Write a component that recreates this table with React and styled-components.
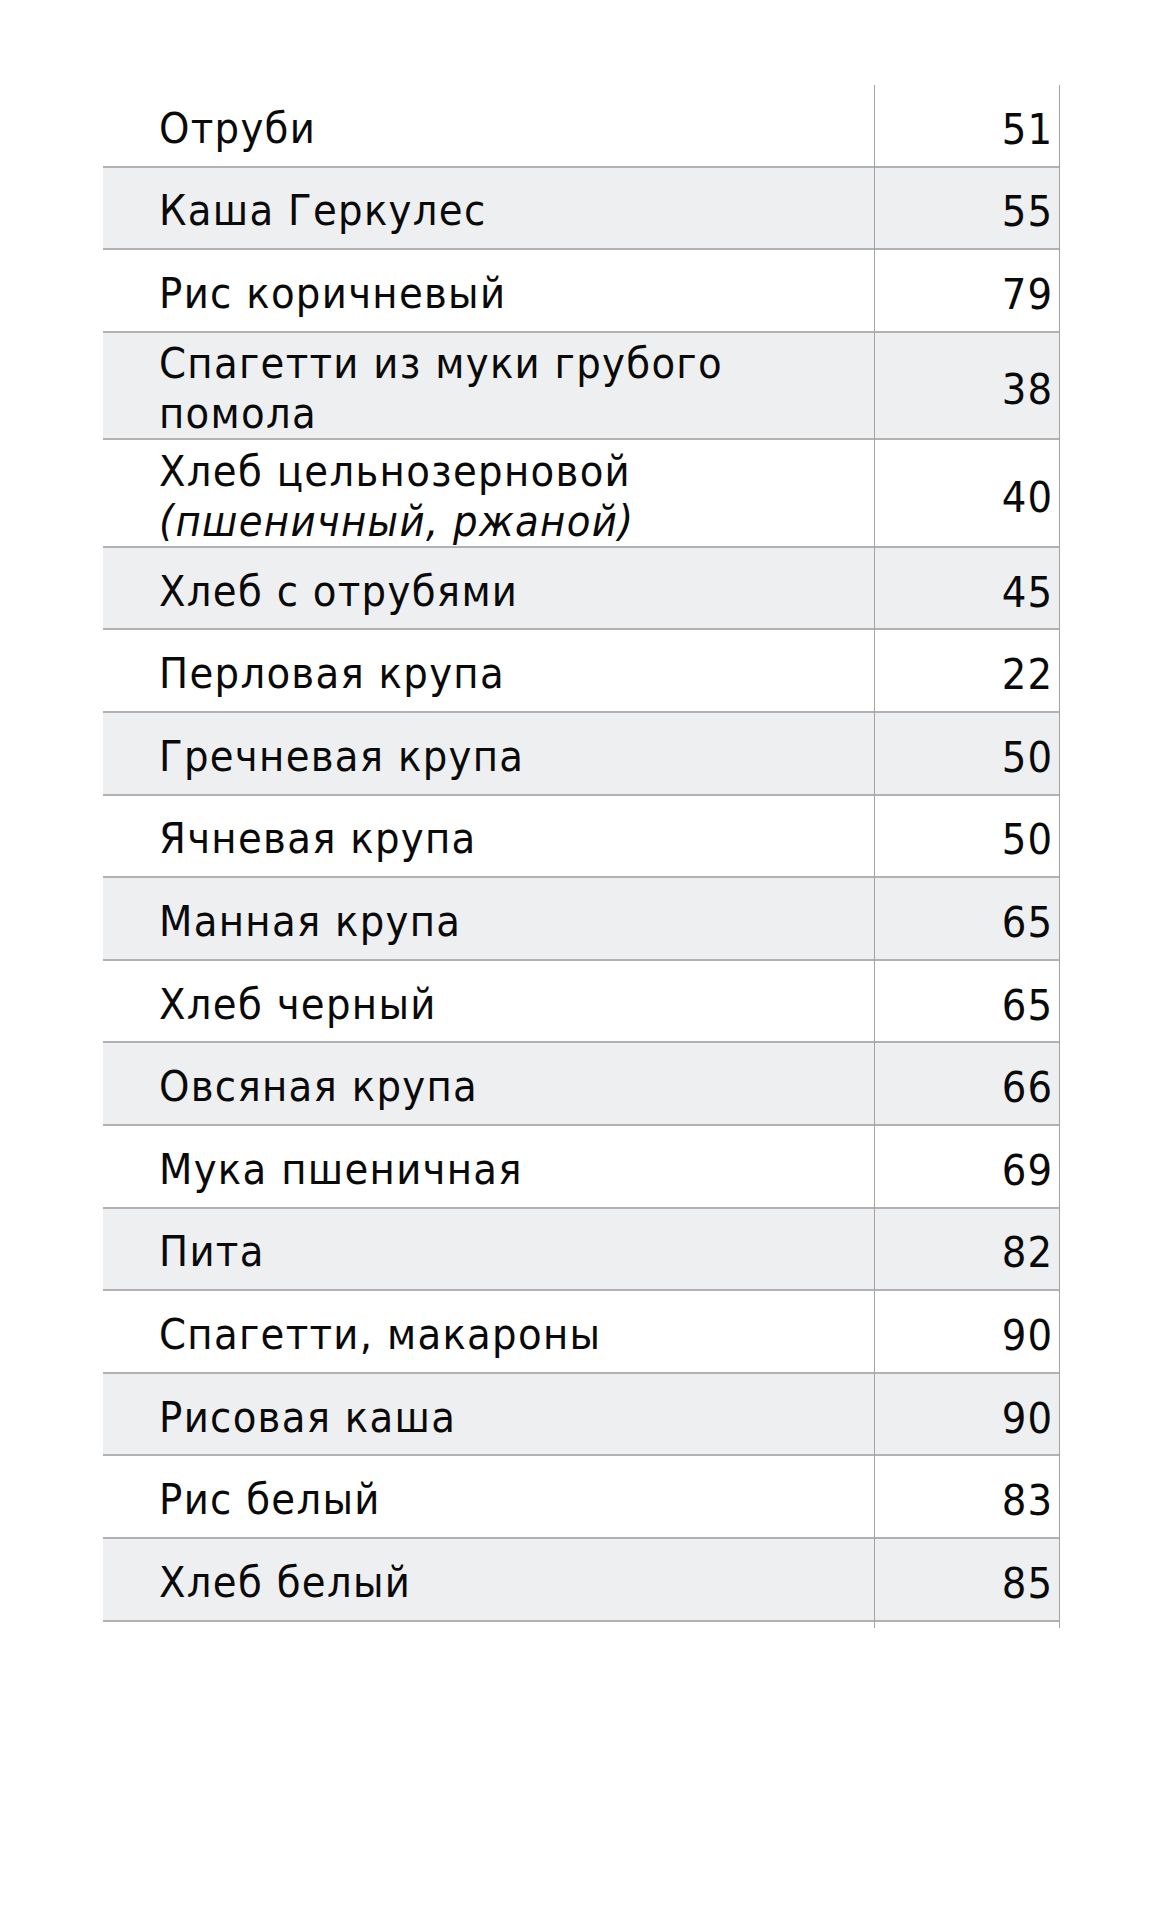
import React from "react";
import styled, { createGlobalStyle } from "styled-components";

// ====================== Global ======================
const GlobalStyle = createGlobalStyle`
  html, body {
    margin: 0;
    padding: 0;
    background: #ffffff;
  }
`;

// ====================== Styled Components ======================
const Page = styled.div`
  width: 1169px;
  min-height: 1924px;
  background: #ffffff;
  padding: 85px 0 0 103px;
  box-sizing: border-box;
  font-family: "DejaVu Sans Condensed", "DejaVu Sans", sans-serif;
  color: #0a0a0a;
`;

const Table = styled.div`
  width: 957px;
  display: flex;
  flex-direction: column;
`;

const Row = styled.div`
  display: grid;
  grid-template-columns: 771px 186px;
  height: ${(p) => (p.$tall ? "107.5px" : "82.6px")};
  box-sizing: border-box;
  border-bottom: 2px solid #b2b2b2;
  background: ${(p) => (p.$shaded ? "#eeeff0" : "#ffffff")};
`;

const NameCell = styled.div`
  display: flex;
  flex-direction: column;
  justify-content: center;
  padding: 5px 0 0 56px;
  font-size: 43px;
  line-height: 50px;
  letter-spacing: 1.3px;
`;

const Note = styled.span`
  font-style: italic;
`;

const ValueCell = styled.div`
  display: flex;
  align-items: center;
  justify-content: flex-end;
  padding: 5px 6px 0 0;
  box-sizing: border-box;
  border-left: 1.5px solid #a3a3a3;
  border-right: 1.5px solid #a3a3a3;
  margin-bottom: -2px;
  font-size: 43px;
  line-height: 50px;
  letter-spacing: 1px;
`;

const Tail = styled.div`
  display: grid;
  grid-template-columns: 771px 186px;
  height: 6px;
`;

const TailCell = styled.div`
  border-left: 1.5px solid #a3a3a3;
  border-right: 1.5px solid #a3a3a3;
  box-sizing: border-box;
`;

// ====================== Data ======================
const items = [
  { name: "Отруби", value: 51 },
  { name: "Каша Геркулес", value: 55 },
  { name: "Рис коричневый", value: 79 },
  { name: "Спагетти из муки грубого", extra: "помола", value: 38 },
  { name: "Хлеб цельнозерновой", note: "(пшеничный, ржаной)", value: 40 },
  { name: "Хлеб с отрубями", value: 45 },
  { name: "Перловая крупа", value: 22 },
  { name: "Гречневая крупа", value: 50 },
  { name: "Ячневая крупа", value: 50 },
  { name: "Манная крупа", value: 65 },
  { name: "Хлеб черный", value: 65 },
  { name: "Овсяная крупа", value: 66 },
  { name: "Мука пшеничная", value: 69 },
  { name: "Пита", value: 82 },
  { name: "Спагетти, макароны", value: 90 },
  { name: "Рисовая каша", value: 90 },
  { name: "Рис белый", value: 83 },
  { name: "Хлеб белый", value: 85 },
];

// ====================== Component ======================
const App = () => {
  return (
    <Page>
      <GlobalStyle />
      <Table>
        {items.map((it, i) => (
          <Row key={i} $shaded={i % 2 === 1} $tall={!!(it.extra || it.note)}>
            <NameCell>
              <div>{it.name}</div>
              {it.extra && <div>{it.extra}</div>}
              {it.note && <Note>{it.note}</Note>}
            </NameCell>
            <ValueCell>{it.value}</ValueCell>
          </Row>
        ))}
        <Tail>
          <div />
          <TailCell />
        </Tail>
      </Table>
    </Page>
  );
};

export default App;
